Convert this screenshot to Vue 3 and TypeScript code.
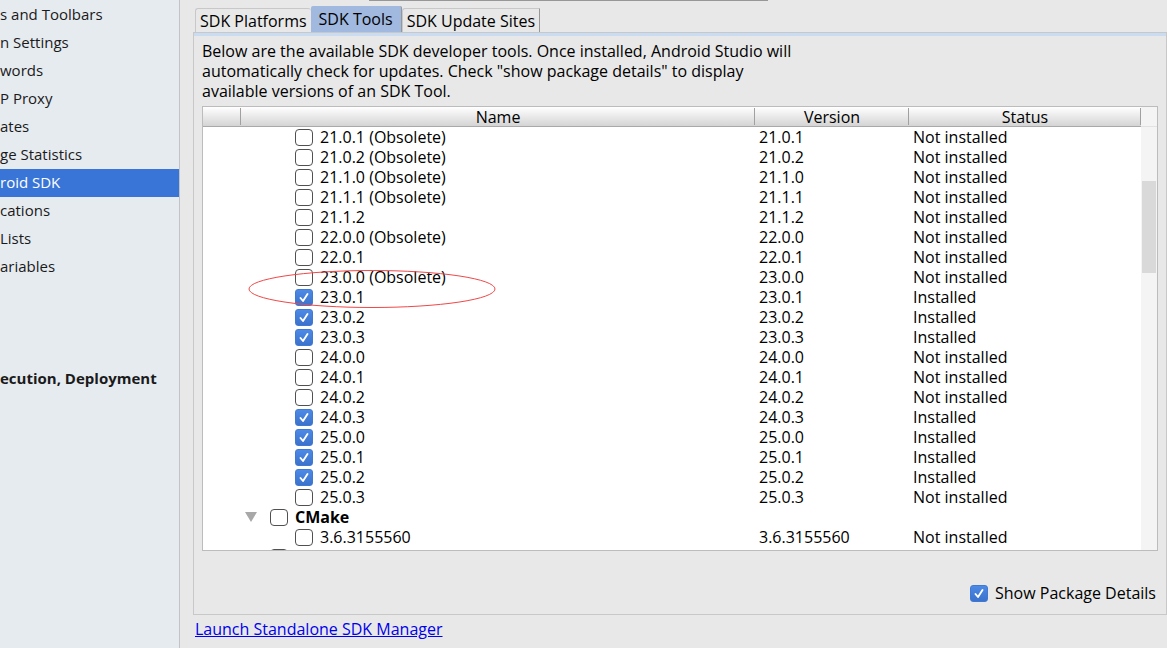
<script setup lang="ts">
import { ref } from 'vue'

interface PackageRow {
  name: string
  version: string
  status: string
  checked: boolean
  group?: boolean
}

const settings = [
  's and Toolbars',
  'n Settings',
  'words',
  'P Proxy',
  'ates',
  'ge Statistics',
  'roid SDK',
  'cations',
  'Lists',
  'ariables',
]
const selectedSetting = ref('roid SDK')

const tabs = ['SDK Platforms', 'SDK Tools', 'SDK Update Sites']
const activeTab = ref('SDK Tools')

const pkg = (version: string, checked = false, obsolete = false): PackageRow => ({
  name: obsolete ? `${version} (Obsolete)` : version,
  version,
  status: checked ? 'Installed' : 'Not installed',
  checked,
})

const rows = ref<PackageRow[]>([
  pkg('21.0.1', false, true),
  pkg('21.0.2', false, true),
  pkg('21.1.0', false, true),
  pkg('21.1.1', false, true),
  pkg('21.1.2'),
  pkg('22.0.0', false, true),
  pkg('22.0.1'),
  pkg('23.0.0', false, true),
  pkg('23.0.1', true),
  pkg('23.0.2', true),
  pkg('23.0.3', true),
  pkg('24.0.0'),
  pkg('24.0.1'),
  pkg('24.0.2'),
  pkg('24.0.3', true),
  pkg('25.0.0', true),
  pkg('25.0.1', true),
  pkg('25.0.2', true),
  pkg('25.0.3'),
  { name: 'CMake', version: '', status: '', checked: false, group: true },
  pkg('3.6.3155560'),
])

const nextGroupChecked = ref(false)
const showDetails = ref(true)
</script>

<template>
  <div class="window">
    <nav class="sidebar" aria-label="Settings">
      <button
        v-for="item in settings"
        :key="item"
        type="button"
        class="setting"
        :class="{ selected: item === selectedSetting }"
        @click="selectedSetting = item"
      >{{ item }}</button>
      <button type="button" class="setting section">ecution, Deployment</button>
    </nav>

    <main class="content">
      <div class="field-edge"></div>
      <div class="tabs" role="tablist">
        <button
          v-for="tab in tabs"
          :key="tab"
          type="button"
          role="tab"
          class="tab"
          :class="{ active: tab === activeTab }"
          :aria-selected="tab === activeTab"
          @click="activeTab = tab"
        >{{ tab }}</button>
      </div>

      <section class="panel">
        <p class="intro">
          Below are the available SDK developer tools. Once installed, Android Studio will<br />
          automatically check for updates. Check "show package details" to display<br />
          available versions of an SDK Tool.
        </p>

        <div class="table-box">
          <div class="table-view">
            <table>
              <colgroup>
                <col class="col-mark" />
                <col />
                <col class="col-version" />
                <col class="col-status" />
              </colgroup>
              <thead>
                <tr>
                  <th aria-label="Update"></th>
                  <th>Name</th>
                  <th>Version</th>
                  <th>Status</th>
                </tr>
              </thead>
              <tbody>
                <tr v-for="row in rows" :key="row.name">
                  <td></td>
                  <td>
                    <div class="name" :class="{ group: row.group }">
                      <svg v-if="row.group" class="arrow" viewBox="0 0 12 10" aria-hidden="true">
                        <path d="M0 0H12L6 10Z" />
                      </svg>
                      <label><input v-model="row.checked" type="checkbox" />{{ row.name }}</label>
                    </div>
                  </td>
                  <td>{{ row.version }}</td>
                  <td>{{ row.status }}</td>
                </tr>
                <tr>
                  <td></td>
                  <td>
                    <div class="name group unlabelled">
                      <input v-model="nextGroupChecked" type="checkbox" aria-label="Package group" />
                    </div>
                  </td>
                  <td></td>
                  <td></td>
                </tr>
              </tbody>
            </table>
          </div>
          <div class="scrollbar"><div class="thumb"></div></div>
          <svg class="annotation" viewBox="0 0 248 38" aria-hidden="true">
            <ellipse cx="124" cy="19" rx="123" ry="18.5" />
          </svg>
        </div>

        <label class="details"><input v-model="showDetails" type="checkbox" />Show Package Details</label>
      </section>

      <a class="launch" href="#">Launch Standalone SDK Manager</a>
    </main>
  </div>
</template>

<style>
body {
  margin: 0;
}
</style>

<style scoped>
.window {
  display: flex;
  height: 100vh;
  overflow: hidden;
  background: #e8e8e8;
  color: #000;
  font-family: "Open Sans", "Noto Sans", sans-serif;
  font-size: 16px;
  line-height: 20px;
}

button {
  border: 0;
  margin: 0;
  font: inherit;
  color: inherit;
  white-space: nowrap;
}

.sidebar {
  box-sizing: border-box;
  flex: 0 0 180px;
  background: #e6ebf0;
  border-right: 1px solid #c0c3c7;
  color: #1a1a1a;
  font-size: 15px;
}

.setting {
  display: block;
  width: 100%;
  height: 28px;
  padding: 0 0 2px;
  background: none;
  text-align: left;
}

.setting:first-child {
  margin-top: 1px;
}

.setting.selected {
  background: #3875d7;
  color: #fff;
}

.setting.section {
  margin-top: 84px;
  font-weight: 700;
}

.content {
  flex: 1;
  min-width: 0;
  display: flex;
  flex-direction: column;
  padding-left: 13px;
}

.field-edge {
  width: 399px;
  height: 1px;
  margin-left: 176px;
  background: #979797;
}

.tabs {
  display: flex;
  align-items: flex-end;
  height: 31px;
  padding-left: 2px;
}

.tab {
  box-sizing: border-box;
  height: 24px;
  padding: 0 4px;
  background: #e8e8e8;
  border: 1px solid #c8c8c8;
  border-bottom: 0;
  border-radius: 3px 3px 0 0;
}

.tab:first-child {
  border-right: 0;
}

.tab:last-child {
  border-right-color: #979797;
  border-radius: 3px 0 0 0;
}

.tab.active {
  height: 26px;
  padding: 0 8px;
  background: #a1b8df;
  border: 0;
  border-right: 1px solid #979797;
  border-radius: 2px 2px 0 0;
}

.panel {
  flex: 1;
  min-height: 0;
  display: flex;
  flex-direction: column;
  padding: 8px 8px 11px;
  border: 1px solid #c8c8c8;
  background: linear-gradient(#c9dcf2, #c9dcf2) 0 0 / 100% 3px no-repeat;
}

.intro {
  margin: 0 0 5px;
}

.table-box {
  position: relative;
  flex: 1;
  min-height: 0;
  display: flex;
  border: 1px solid #bcbcbc;
  background: #fff;
}

.table-view {
  flex: 1;
  min-width: 0;
  overflow: hidden;
}

table {
  width: 100%;
  table-layout: fixed;
  border-collapse: separate;
  border-spacing: 0;
}

.col-mark {
  width: 38px;
}

.col-version {
  width: 154px;
}

.col-status {
  width: 232px;
}

th {
  box-sizing: border-box;
  height: 20px;
  padding: 1px 0 0;
  font-weight: 400;
  line-height: 18px;
  border-bottom: 1px solid #a9a9a9;
  background:
    linear-gradient(#a0a0a0, #a0a0a0) 100% 1px / 1px 17px no-repeat,
    linear-gradient(#fff, #d4d4d4);
}

td {
  height: 20px;
  padding: 0 0 0 4px;
  white-space: nowrap;
}

.name {
  display: flex;
  align-items: center;
  height: 20px;
  padding-left: 50px;
}

.name.group {
  padding-left: 0;
  font-weight: 700;
}

.name.unlabelled {
  padding-left: 25px;
}

label {
  display: flex;
  align-items: center;
}

.arrow {
  width: 12px;
  height: 10px;
  margin-right: 13px;
  fill: #a8a8a8;
}

input {
  appearance: none;
  box-sizing: border-box;
  flex: none;
  width: 18px;
  height: 17px;
  margin: 0 7px 0 0;
  border: 1px solid #505050;
  border-radius: 4px;
  background: #fff;
}

input:checked {
  border-color: #4079d3;
  border-radius: 3px;
  background:
    url("data:image/svg+xml,%3Csvg xmlns='http://www.w3.org/2000/svg' viewBox='0 0 16 15'%3E%3Cpath d='M4.5 8L7 11L11.5 4' fill='none' stroke='white' stroke-width='1.9' stroke-linecap='round' stroke-linejoin='round'/%3E%3C/svg%3E") center / 16px 15px no-repeat,
    linear-gradient(#4c8ae6, #3b72cc);
}

.scrollbar {
  flex: 0 0 16px;
  background: linear-gradient(#e2e2e2, #e2e2e2) 0 19px / 100% 1px no-repeat #f4f4f4;
}

.thumb {
  width: 14px;
  height: 92px;
  margin: 74px auto 0;
  background: #d9d9d9;
}

.annotation {
  position: absolute;
  top: 163px;
  left: 45px;
  width: 248px;
  height: 38px;
  fill: none;
  stroke: #f04848;
  pointer-events: none;
}

.details {
  align-self: flex-end;
  height: 20px;
  margin: 32px 2px 0 0;
}

.launch {
  align-self: flex-start;
  margin: 4px 0 9px 2px;
  color: #0000ee;
}
</style>
